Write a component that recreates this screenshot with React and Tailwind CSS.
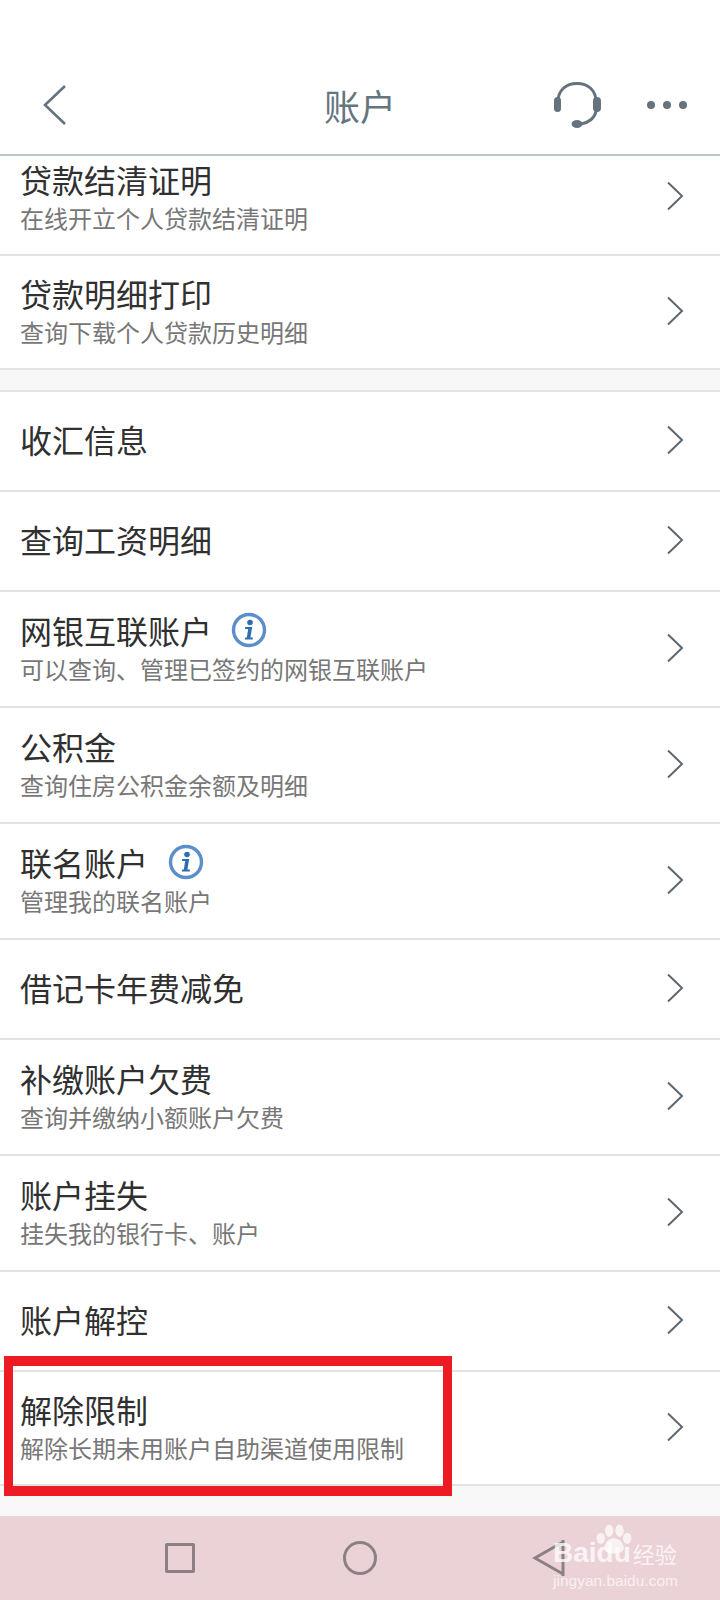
const CJK = "font-['Noto_Sans_CJK_SC','Noto_Sans',sans-serif]";

function Chevron() {
  return (
    <svg width="18" height="30" viewBox="0 0 18 30" fill="none" className="shrink-0">
      <path d="M2 1.5 16 15 2 28.5" stroke="#5d6870" strokeWidth="2" />
    </svg>
  );
}

function InfoBadge() {
  return (
    <svg width="36" height="36" viewBox="0 0 36 36" className="shrink-0">
      <circle cx="18" cy="18" r="15.5" fill="#fff" stroke="#5b8fcb" strokeWidth="3.4" />
      <circle cx="19" cy="10.5" r="2.8" fill="#2f6db3" />
      <path d="M14 15h7.2l-1.8 10.6h2.4v2h-8l.4-2h1.6l1.4-8.6h-3z" fill="#2f6db3" />
    </svg>
  );
}

function Row({ title, sub, info, gap = "ml-[19px]", h = "h-[116px]" }) {
  return (
    <div className={`${h} shrink-0 flex items-center justify-between pl-[20px] pr-[36px] pb-[2px] border-b-2 border-[#e3e3e3] bg-white`}>
      <div className={sub ? "min-w-0" : "min-w-0 pb-[2px]"}>
        <div className="flex items-center h-[38px] text-[32px] leading-[38px] text-[#303030]">
          <span>{title}</span>
          {info && <span className={gap}><InfoBadge /></span>}
        </div>
        {sub && <div className="mt-[3px] text-[24px] leading-[34px] text-[#777777]">{sub}</div>}
      </div>
      <Chevron />
    </div>
  );
}

function Paw() {
  return (
    <svg width="44" height="32" viewBox="0 0 62 46" fill="#ffffff" fillOpacity="0.7">
      <ellipse cx="12" cy="22" rx="6" ry="8" />
      <ellipse cx="24" cy="11" rx="6" ry="9" />
      <ellipse cx="39" cy="11" rx="6" ry="9" />
      <ellipse cx="50" cy="22" rx="6" ry="8" />
      <path d="M31 22c-8 0-14 8-14 14 0 6 6 8 14 8s14-2 14-8c0-6-6-14-14-14z" />
    </svg>
  );
}

export default function App() {
  const rows = [
    { title: "收汇信息", h: "h-[100px]" },
    { title: "查询工资明细", h: "h-[100px]" },
    { title: "网银互联账户", sub: "可以查询、管理已签约的网银互联账户", info: true },
    { title: "公积金", sub: "查询住房公积金余额及明细" },
    { title: "联名账户", sub: "管理我的联名账户", info: true, gap: "ml-[20px]" },
    { title: "借记卡年费减免", h: "h-[100px]" },
    { title: "补缴账户欠费", sub: "查询并缴纳小额账户欠费" },
    { title: "账户挂失", sub: "挂失我的银行卡、账户" },
    { title: "账户解控", h: "h-[100px]" },
    { title: "解除限制", sub: "解除长期未用账户自助渠道使用限制", h: "h-[114px]" },
  ];

  return (
    <div className={`${CJK} relative w-[720px] h-[1600px] overflow-hidden bg-white flex flex-col`}>
      {/* Top bar */}
      <header className="h-[156px] shrink-0 pt-[72px] border-b-2 border-[#b9c8cc] bg-white">
        <div className="relative h-[66px] flex items-center justify-between pl-[42px] pr-[33px]">
          <svg width="26" height="42" viewBox="0 0 26 42" fill="none">
            <path d="M23 2 3 21l20 19" stroke="#64737d" strokeWidth="2.6" />
          </svg>
          <span className="absolute left-0 right-0 text-center text-[36px] leading-[66px] text-[#65757f]">账户</span>
          <div className="flex items-center gap-[45px]">
            <svg width="50" height="47" viewBox="0 0 50 47" fill="none">
              <path d="M6 20C6 8 14 1.5 25 1.5S44 8 44 20" stroke="#64737d" strokeWidth="3" />
              <rect x="2" y="15" width="7" height="15" rx="3.5" fill="#64737d" />
              <rect x="41" y="15" width="8" height="15" rx="4" fill="#64737d" />
              <path d="M44 29c-1 7-8 12-15 13" stroke="#64737d" strokeWidth="3" />
              <ellipse cx="25" cy="42" rx="5.5" ry="4" fill="#64737d" />
            </svg>
            <div className="flex items-center gap-[8px]">
              <span className="w-[8px] h-[8px] rounded-full bg-[#64737d]" />
              <span className="w-[8px] h-[8px] rounded-full bg-[#64737d]" />
              <span className="w-[8px] h-[8px] rounded-full bg-[#64737d]" />
            </div>
          </div>
        </div>
      </header>

      {/* Scrolled list, first row is cut off by the top bar */}
      <div className="h-[100px] shrink-0 flex items-center justify-between pl-[20px] pr-[36px] border-b-2 border-[#e3e3e3] overflow-hidden">
        <div className="-mt-[16px]">
          <div className="h-[38px] text-[32px] leading-[38px] text-[#303030]">贷款结清证明</div>
          <div className="mt-[3px] text-[24px] leading-[34px] text-[#777777]">在线开立个人贷款结清证明</div>
        </div>
        <div className="-mt-[18px]"><Chevron /></div>
      </div>
      <Row title="贷款明细打印" sub="查询下载个人贷款历史明细" h="h-[114px]" />
      <div className="h-[22px] shrink-0 bg-[#f7f7f7] border-b-2 border-[#e3e3e3]" />

      {rows.map((r) => (
        <Row key={r.title} {...r} />
      ))}

      <div className="flex-1 bg-[#f8f8f8]" />

      {/* Android nav bar */}
      <nav className="relative h-[84px] shrink-0 bg-[#ebd2d7]">
        <div className="h-full flex items-center">
          <span className="ml-[165px] w-[30px] h-[30px] border-[3px] border-[#8b8084] rounded-[2px]" />
          <span className="ml-[148px] w-[34px] h-[34px] border-[3px] border-[#8b8084] rounded-full" />
          <svg width="36" height="36" viewBox="0 0 36 36" fill="none" className="ml-[155px]">
            <path d="M31 2 3 18l28 16" stroke="#8b8084" strokeWidth="3" />
            <path d="M31 0v36" stroke="#8b8084" strokeWidth="3" />
          </svg>
        </div>
        {/* Baidu watermark */}
        <div className="absolute left-[553px] top-[7px] w-[127px] whitespace-nowrap">
          <div className="absolute left-[39px] top-0"><Paw /></div>
          <div className="relative mt-[13px] flex items-center h-[34px] font-['Liberation_Sans',sans-serif] font-bold text-[28px] leading-[34px] text-white/75">
            <span>Baidu</span>
            <span className={`${CJK} ml-[2px] font-normal text-[22px] leading-[34px]`}>经验</span>
          </div>
          <div className="font-['Liberation_Sans',sans-serif] text-[15.5px] leading-[20px] mt-[1px] text-white/70">jingyan.baidu.com</div>
        </div>
      </nav>

      {/* Red annotation box */}
      <div className="absolute left-[4px] top-[1356px] w-[448px] h-[140px] border-x-[9px] border-y-[10px] border-[#ed1c24]" />
    </div>
  );
}
